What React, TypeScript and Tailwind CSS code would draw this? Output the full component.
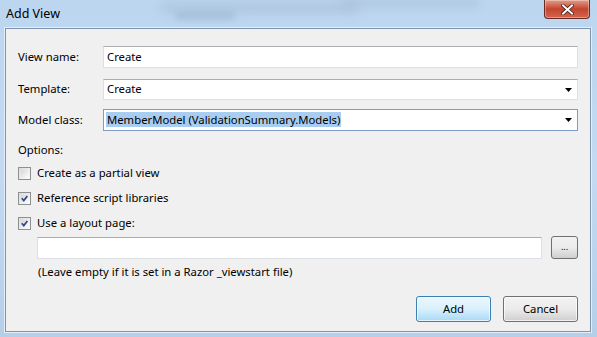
import React from "react";

const font = { fontFamily: '"Noto Sans", "Open Sans", sans-serif' };

function Check({ checked }: { checked: boolean }) {
  return (
    <div className="w-[13px] h-[13px] border border-[#8e8f8f] bg-gradient-to-br from-[#dcdcdc] to-[#fcfcfc] p-[2px] shrink-0">
      <div className="w-full h-full bg-gradient-to-br from-[#d6d6d6] to-[#fbfbfb] flex items-center justify-center">
        {checked && (
          <svg width="9" height="9" viewBox="0 0 9 9">
            <path d="M1 4.2 L3.6 7.2 L8.2 1.2" fill="none" stroke="#33448a" strokeWidth="2.2" />
          </svg>
        )}
      </div>
    </div>
  );
}

function Arrow() {
  return (
    <svg width="7" height="4" viewBox="0 0 7 4" className="mr-[5px]">
      <path d="M0 0 H7 L3.5 4 Z" fill="#000" />
    </svg>
  );
}

export default function App() {
  return (
    <div
      className="w-[597px] h-[337px] relative overflow-hidden bg-gradient-to-b from-[#bcd6f0] via-[#c3daf1] to-[#b6cfe9] flex flex-col text-[11.3px] text-black"
      style={font}
    >
      {/* blurred background smudges */}
      <div className="absolute left-[160px] top-[2px] w-[200px] h-[12px] rounded-full bg-[#9fb3c9] opacity-40 blur-[5px]" />
      <div className="absolute left-[340px] top-[-4px] w-[140px] h-[12px] rounded-full bg-[#a3b8cf] opacity-40 blur-[5px]" />
      <div className="absolute left-[175px] top-[12px] w-[60px] h-[8px] rounded-full bg-[#8ba4c0] opacity-40 blur-[3px]" />
      {/* title bar */}
      <div className="h-[28px] flex items-start relative">
        <div className="pl-[6px] pt-[5px] text-[12.5px] leading-[18px] text-black">Add View</div>
        <div className="ml-auto mr-[7px] w-[46px] h-[19px] rounded-b-[4px] border border-[#6b2a22] border-t-0 bg-gradient-to-b from-[#e39a88] via-[#c4442e] to-[#d0664f] flex items-center justify-center shadow-[inset_0_0_0_1px_rgba(255,255,255,0.35)]">
          <svg width="13" height="11" viewBox="0 0 13 11">
            <path d="M2 1.5 L11 9.5 M11 1.5 L2 9.5" stroke="#4a1a14" strokeWidth="3.6" strokeLinecap="square" />
            <path d="M2 1.5 L11 9.5 M11 1.5 L2 9.5" stroke="#ffffff" strokeWidth="2" strokeLinecap="square" />
          </svg>
        </div>
      </div>
      {/* client */}
      <div className="flex-1 ml-[5px] mr-[6px] mb-[5px] border border-[#7f93ab] shadow-[0_0_0_1px_#e4eefa] bg-[#f0f0f0] flex flex-col px-[12px] pt-[17px]">
        <div className="flex items-center h-[22px]">
          <div className="w-[85px]">View name:</div>
          <div className="flex-1 h-[22px] bg-white border border-[#dbdfe6] border-t-[#abadb3] flex items-center pl-[3px]">Create</div>
        </div>
        <div className="flex items-center h-[21px] mt-[11px]">
          <div className="w-[85px]">Template:</div>
          <div className="flex-1 h-[21px] bg-white border border-[#dbdfe6] border-t-[#abadb3] flex items-center pl-[3px]">
            <span className="flex-1">Create</span>
            <Arrow />
          </div>
        </div>
        <div className="flex items-center h-[22px] mt-[9px]">
          <div className="w-[85px]">Model class:</div>
          <div className="flex-1 h-[22px] bg-white border border-[#7a9cc5] flex items-center pl-[2px]">
            <span className="flex-1">
              <span className="bg-[#a9cdf0] px-[1px]">MemberModel (ValidationSummary.Models)</span>
            </span>
            <Arrow />
          </div>
        </div>
        <div className="mt-[10px] h-[17px] leading-[17px]">Options:</div>
        <div className="flex flex-col gap-[8px] mt-[7px]">
          <label className="flex items-center gap-[6px] h-[17px]">
            <Check checked={false} />
            <span>Create as a partial view</span>
          </label>
          <label className="flex items-center gap-[6px] h-[17px]">
            <Check checked={true} />
            <span>Reference script libraries</span>
          </label>
          <label className="flex items-center gap-[6px] h-[17px]">
            <Check checked={true} />
            <span>Use a layout page:</span>
          </label>
        </div>
        <div className="flex items-center mt-[4px] pl-[19px] gap-[9px]">
          <div className="flex-1 h-[22px] bg-white border border-[#dbdfe6] border-t-[#abadb3]" />
          <div className="w-[27px] h-[23px] rounded-[3px] border border-[#707070] bg-gradient-to-b from-[#f2f2f2] via-[#ebebeb] to-[#cfcfcf] flex items-center justify-center text-[9px] leading-none pb-[2px]">...</div>
        </div>
        <div className="pl-[20px] mt-[4px] h-[17px] leading-[17px]">(Leave empty if it is set in a Razor _viewstart file)</div>
        <div className="flex justify-end gap-[12px] mt-[16px]">
          <div className="w-[75px] h-[26px] rounded-[3px] border border-[#3c7fb1] bg-gradient-to-b from-[#eaf6fd] via-[#d9f0fc] to-[#a7d9f5] shadow-[inset_0_0_0_1px_rgba(255,255,255,0.7)] flex items-center justify-center">Add</div>
          <div className="w-[75px] h-[26px] rounded-[3px] border border-[#707070] bg-gradient-to-b from-[#f2f2f2] via-[#ebebeb] to-[#cfcfcf] shadow-[inset_0_0_0_1px_rgba(255,255,255,0.7)] flex items-center justify-center">Cancel</div>
        </div>
      </div>
    </div>
  );
}
